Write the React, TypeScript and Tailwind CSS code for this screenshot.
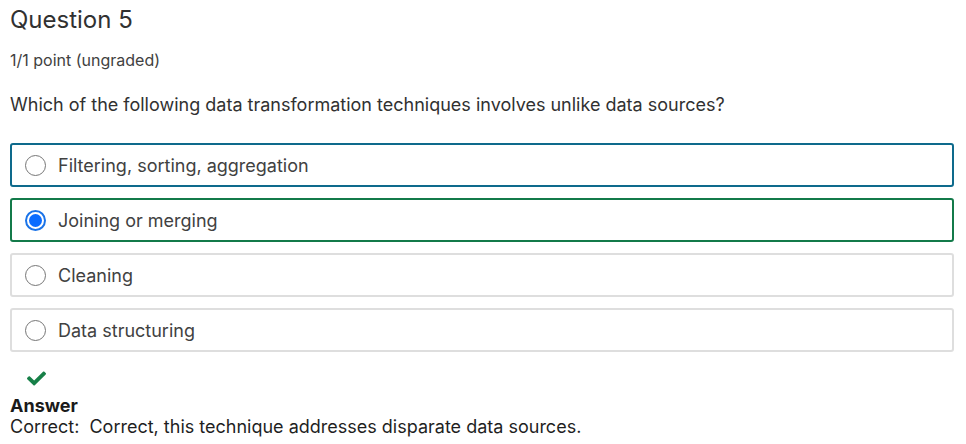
import React from 'react';
import { FaCheck } from 'react-icons/fa';

const opcoes = [
  { label: 'Filtering, sorting, aggregation', estado: 'foco' },
  { label: 'Joining or merging', estado: 'correto' },
  { label: 'Cleaning', estado: 'normal' },
  { label: 'Data structuring', estado: 'normal' },
];

const Radio = ({ marcado }: { marcado: boolean }) =>
  marcado ? (
    <span className="w-[21px] h-[21px] rounded-full border-2 border-[#1a73e8] flex items-center justify-center shrink-0">
      <span className="w-[13px] h-[13px] rounded-full bg-[#0a6cff]" />
    </span>
  ) : (
    <span className="w-[21px] h-[21px] rounded-full border border-[#767676] bg-white shrink-0" />
  );

const getBorda = (estado: string) => {
  switch (estado) {
    case 'foco':
      return 'border-[#0e6a8c]';
    case 'correto':
      return 'border-[#137a4a]';
    default:
      return 'border-[#dedede]';
  }
};

export default function App() {
  return (
    <div className="bg-white w-[966px] h-[444px] px-[10px] pt-[4px] text-[#313131]" style={{ fontFamily: 'Inter, "Noto Sans", sans-serif' }}>
      <h2 className="text-[24px] leading-[32px] font-normal">Question 5</h2>
      <div className="text-[16px] leading-[20px] text-[#414141] mt-[14px]">1/1 point (ungraded)</div>
      <p className="text-[18px] leading-[24px] mt-[23px] text-[#313131]">
        Which of the following data transformation techniques involves unlike data sources?
      </p>

      <div className="mt-[26px] w-[944px] flex flex-col gap-[11px]">
        {opcoes.map((op) => (
          <div
            key={op.label}
            className={`h-[44px] border-2 rounded-[3px] flex items-center pl-[13px] gap-[12px] ${getBorda(op.estado)}`}
          >
            <Radio marcado={op.estado === 'correto'} />
            <span className="text-[18px] text-[#414141]">{op.label}</span>
          </div>
        ))}
      </div>

      <div className="mt-[18px] pl-[17px] h-[16px] flex items-center text-[#178048]">
        <FaCheck size={19} />
      </div>
      <div className="mt-[10px] text-[18px] leading-[20px] font-bold text-[#1a1a1a]">Answer</div>
      <div className="text-[18px] leading-[21px] text-[#1f1f1f]">Correct:&nbsp; Correct, this technique addresses disparate data sources.</div>
    </div>
  );
}
